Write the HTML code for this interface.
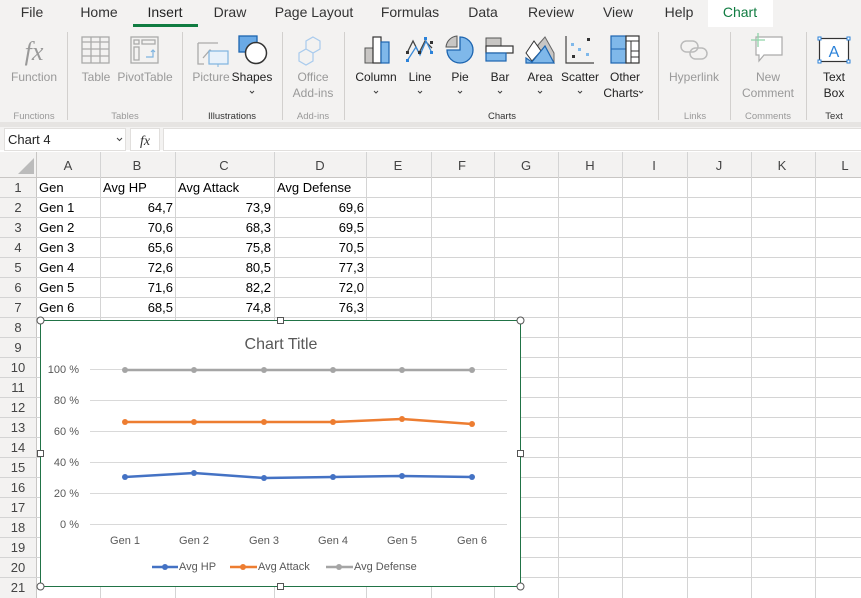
<!DOCTYPE html>
<html><head><meta charset="utf-8"><style>
html,body{margin:0;padding:0;width:861px;height:598px;overflow:hidden;background:#fff}
svg{display:block;font-family:"Liberation Sans",sans-serif}
</style></head><body>
<svg width="861" height="598" viewBox="0 0 861 598" xmlns="http://www.w3.org/2000/svg">
<!-- ribbon -->
<rect x="0" y="0" width="861" height="150" fill="#f3f2f1"/>
<rect x="0" y="122" width="861" height="5" fill="#e6e4e2"/>
<rect x="708" y="0" width="65" height="27" fill="#fff"/>
<g font-size="14" fill="#333" text-anchor="middle">
<text x="32" y="17">File</text><text x="99" y="17">Home</text>
<text x="165" y="17" fill="#222">Insert</text><text x="230" y="17">Draw</text>
<text x="314" y="17">Page Layout</text><text x="410" y="17">Formulas</text>
<text x="483" y="17">Data</text><text x="551" y="17">Review</text>
<text x="618" y="17">View</text><text x="679" y="17">Help</text>
<text x="740" y="17" fill="#107c41">Chart</text>
</g>
<rect x="133" y="24" width="65" height="3" fill="#107c41"/>
<g stroke="#d2d0ce" stroke-width="1">
<line x1="67.5" y1="32" x2="67.5" y2="120"/><line x1="182.5" y1="32" x2="182.5" y2="120"/>
<line x1="282.5" y1="32" x2="282.5" y2="120"/><line x1="344.5" y1="32" x2="344.5" y2="120"/>
<line x1="658.5" y1="32" x2="658.5" y2="120"/><line x1="730.5" y1="32" x2="730.5" y2="120"/>
<line x1="806.5" y1="32" x2="806.5" y2="120"/>
</g>
<!-- icons -->
<text x="34" y="60" font-family="Liberation Serif,serif" font-style="italic" font-size="26" fill="#999" text-anchor="middle">fx</text>
<g fill="none" stroke="#aaa" stroke-width="1.3">
<rect x="82" y="37" width="27" height="26"/><line x1="82" y1="42" x2="109" y2="42"/><line x1="82" y1="49" x2="109" y2="49"/><line x1="82" y1="56" x2="109" y2="56"/><line x1="91" y1="37" x2="91" y2="63"/><line x1="100" y1="37" x2="100" y2="63"/>
<rect x="131" y="37" width="27" height="26"/><rect x="134" y="40" width="5" height="4"/><rect x="142" y="40" width="13" height="4"/><rect x="134" y="47" width="5" height="13"/>
<path d="M198 43h20M198 43v21h6M203 58l7-8 5 5" />
</g>
<path d="M146 57h7v-7M151 52l2-2 2 2" fill="none" stroke="#7fb4e0" stroke-width="1.2"/>
<rect x="209" y="51" width="19" height="13" fill="#e8f1fa" stroke="#7fb4e0" stroke-width="1.2"/>
<line x1="218" y1="64" x2="218" y2="67" stroke="#7fb4e0"/>
<rect x="239" y="36" width="18" height="16" fill="#6aaae6" stroke="#1d65b0" stroke-width="1.3"/>
<circle cx="256" cy="53" r="10.5" fill="#fff" stroke="#333" stroke-width="1.5"/>
<path d="M313 37l7 4v8l-7 4-7-4v-8zM306 49l7 4v8l-7 4-7-4v-8z" fill="none" stroke="#a9cbed" stroke-width="1.2"/>
<!-- column -->
<rect x="365" y="48" width="8" height="15" fill="#c8c6c4" stroke="#555" stroke-width="1"/>
<rect x="373" y="37" width="8" height="26" fill="#fff" stroke="#333" stroke-width="1.2"/>
<rect x="381" y="42" width="8" height="21" fill="#7fb8ea" stroke="#1d65b0" stroke-width="1.2"/>
<!-- line -->
<path d="M407 53l6-12 6 12 6-12 7 7" fill="none" stroke="#444" stroke-width="1.3"/>
<path d="M407 61l9-14 4 8 6-14 6 12" fill="none" stroke="#3b8bd8" stroke-width="1.3"/>
<g fill="#333"><rect x="406" y="51" width="3" height="3"/><rect x="418" y="51" width="3" height="3"/><rect x="430" y="41" width="3" height="3"/></g>
<g fill="#2b82d9"><rect x="406" y="59" width="3" height="3"/><rect x="424" y="37" width="3" height="3"/><rect x="430" y="51" width="3" height="3"/></g>
<!-- pie -->
<path d="M460 37a13 13 0 1 1 -13 13h13z" fill="#7fb8ea" stroke="#1d65b0" stroke-width="1.3"/>
<path d="M457 36a12 12 0 0 0 -11 11h11z" fill="#c8c6c4" stroke="#555" stroke-width="1"/>
<!-- bar -->
<rect x="486" y="38" width="15" height="8" fill="#c8c6c4" stroke="#555"/>
<rect x="486" y="46" width="27" height="7" fill="#fff" stroke="#333" stroke-width="1.2"/>
<rect x="486" y="53" width="20" height="8" fill="#7fb8ea" stroke="#1d65b0" stroke-width="1.2"/>
<!-- area -->
<path d="M538 45l7-8 9 16v10h-16z" fill="#c8c6c4" stroke="#666"/>
<path d="M526 53l8-12 7 10-9 10z" fill="#fff" stroke="#333"/>
<path d="M526 63v-5l6 4 13-16 9 17z" fill="#7fb8ea" stroke="#1d65b0" stroke-width="1.2"/>
<!-- scatter -->
<path d="M566 36v27h28" fill="none" stroke="#444" stroke-width="1.2"/>
<g fill="#333"><rect x="587" y="38" width="3" height="3"/><rect x="572" y="55" width="3" height="3"/></g>
<g fill="#7fb8ea"><rect x="571" y="43" width="3" height="3"/><rect x="578" y="48" width="3" height="3"/><rect x="586" y="53" width="3" height="3"/></g>
<!-- other -->
<rect x="611" y="36" width="15" height="27" fill="#7fb8ea" stroke="#1d65b0" stroke-width="1.2"/>
<line x1="611" y1="49" x2="626" y2="49" stroke="#1d65b0"/>
<rect x="626" y="36" width="13" height="27" fill="#fff" stroke="#333" stroke-width="1.2"/>
<path d="M626 41h13M631 41v22M631 51h8M631 57h8" stroke="#333" fill="none"/>
<!-- hyperlink -->
<g fill="none" stroke="#bbb" stroke-width="1.5"><rect x="681" y="41" width="17" height="11" rx="5.5"/><rect x="690" y="48" width="17" height="11" rx="5.5"/></g>
<!-- comment -->
<path d="M756 37h26v18h-18l-5 6v-6h-3z" fill="#fff" stroke="#aaa" stroke-width="1.2"/>
<path d="M758 33v14M751 40h14" stroke="#8fd3a8" stroke-width="1.3"/>
<!-- textbox -->
<rect x="819.5" y="38.5" width="29" height="23" fill="#fff" stroke="#333" stroke-width="1.2"/>
<g fill="#fff" stroke="#2b82d9"><rect x="818" y="37" width="3" height="3"/><rect x="847" y="37" width="3" height="3"/><rect x="818" y="60" width="3" height="3"/><rect x="847" y="60" width="3" height="3"/></g>
<text x="834" y="57" font-size="16" fill="#2b82d9" text-anchor="middle">A</text>
<!-- button labels -->
<g font-size="12" text-anchor="middle" fill="#222">
<text x="34" y="81" fill="#999">Function</text><text x="96" y="81" fill="#999">Table</text><text x="145" y="81" fill="#999">PivotTable</text>
<text x="211" y="81" fill="#999">Picture</text><text x="252" y="81">Shapes</text>
<text x="313" y="81" fill="#999">Office</text><text x="313" y="97" fill="#999">Add-ins</text>
<text x="376" y="81">Column</text><text x="420" y="81">Line</text><text x="460" y="81">Pie</text><text x="500" y="81">Bar</text>
<text x="540" y="81">Area</text><text x="580" y="81">Scatter</text><text x="625" y="81">Other</text><text x="621" y="97">Charts</text>
<text x="694" y="81" fill="#999">Hyperlink</text><text x="768" y="81" fill="#999">New</text><text x="768" y="97" fill="#999">Comment</text>
<text x="834" y="81">Text</text><text x="834" y="97">Box</text>
</g>
<g fill="none" stroke="#444" stroke-width="1">
<path d="M250 91l2 2 2-2M374 91l2 2 2-2M418 91l2 2 2-2M458 91l2 2 2-2M498 91l2 2 2-2M538 91l2 2 2-2M578 91l2 2 2-2M639 91l2 2 2-2"/>
</g>
<g font-size="9.5" text-anchor="middle" fill="#999">
<text x="34" y="119">Functions</text><text x="125" y="119">Tables</text><text x="232" y="119" fill="#333">Illustrations</text>
<text x="313" y="119">Add-ins</text><text x="502" y="119" fill="#333">Charts</text><text x="695" y="119">Links</text>
<text x="768" y="119">Comments</text><text x="834" y="119" fill="#333">Text</text>
</g>
<!-- formula bar -->
<rect x="4.5" y="128.5" width="121" height="22" fill="#fff" stroke="#e1dfdd"/>
<text x="8" y="144" font-size="13" fill="#222">Chart 4</text>
<path d="M117 138l2.5 2.5 2.5-2.5" fill="none" stroke="#444"/>
<rect x="130.5" y="128.5" width="29" height="22" fill="#fff" stroke="#e1dfdd"/>
<text x="145" y="145" font-family="Liberation Serif,serif" font-style="italic" font-size="14" fill="#333" text-anchor="middle">fx</text>
<rect x="163.5" y="128.5" width="700" height="22" fill="#fff" stroke="#e1dfdd"/>
<!-- headers -->
<rect x="0" y="152" width="861" height="26" fill="#f3f2f1"/>
<rect x="0" y="178" width="36" height="420" fill="#f3f2f1"/>
<path d="M34 158v16h-16z" fill="#bbb"/>
<g stroke="#d4d4d4" stroke-width="1">
<line x1="0" y1="177.5" x2="861" y2="177.5" stroke="#c8c6c4"/>
<line x1="36.5" y1="152" x2="36.5" y2="598" stroke="#c8c6c4"/>
<path d="M100.5 152v446M175.5 152v446M274.5 152v446M366.5 152v446M431.5 152v446M494.5 152v446M558.5 152v446M622.5 152v446M687.5 152v446M751.5 152v446M815.5 152v446"/>
<path d="M0 197.5h861M0 217.5h861M0 237.5h861M0 257.5h861M0 277.5h861M0 297.5h861M0 317.5h861M0 337.5h861M0 357.5h861M0 377.5h861M0 397.5h861M0 417.5h861M0 437.5h861M0 457.5h861M0 477.5h861M0 497.5h861M0 517.5h861M0 537.5h861M0 557.5h861M0 577.5h861"/>
</g>
<g font-size="13" fill="#444" text-anchor="middle">
<text x="68" y="170">A</text><text x="137" y="170">B</text><text x="224" y="170">C</text><text x="320" y="170">D</text><text x="398" y="170">E</text><text x="462" y="170">F</text><text x="526" y="170">G</text><text x="590" y="170">H</text><text x="654" y="170">I</text><text x="719" y="170">J</text><text x="782" y="170">K</text><text x="845" y="170">L</text>
<text x="18" y="192">1</text><text x="18" y="212">2</text><text x="18" y="232">3</text><text x="18" y="252">4</text><text x="18" y="272">5</text><text x="18" y="292">6</text><text x="18" y="312">7</text><text x="18" y="332">8</text><text x="18" y="352">9</text><text x="18" y="372">10</text><text x="18" y="392">11</text><text x="18" y="412">12</text><text x="18" y="432">13</text><text x="18" y="452">14</text><text x="18" y="472">15</text><text x="18" y="492">16</text><text x="18" y="512">17</text><text x="18" y="532">18</text><text x="18" y="552">19</text><text x="18" y="572">20</text><text x="18" y="592">21</text>
</g>
<g font-size="13" fill="#000">
<text x="39" y="192">Gen</text><text x="103" y="192">Avg HP</text><text x="178" y="192">Avg Attack</text><text x="277" y="192">Avg Defense</text>
<text x="39" y="212">Gen 1</text><text x="39" y="232">Gen 2</text><text x="39" y="252">Gen 3</text><text x="39" y="272">Gen 4</text><text x="39" y="292">Gen 5</text><text x="39" y="312">Gen 6</text>
<g text-anchor="end">
<text x="173" y="212">64,7</text><text x="271" y="212">73,9</text><text x="364" y="212">69,6</text>
<text x="173" y="232">70,6</text><text x="271" y="232">68,3</text><text x="364" y="232">69,5</text>
<text x="173" y="252">65,6</text><text x="271" y="252">75,8</text><text x="364" y="252">70,5</text>
<text x="173" y="272">72,6</text><text x="271" y="272">80,5</text><text x="364" y="272">77,3</text>
<text x="173" y="292">71,6</text><text x="271" y="292">82,2</text><text x="364" y="292">72,0</text>
<text x="173" y="312">68,5</text><text x="271" y="312">74,8</text><text x="364" y="312">76,3</text>
</g></g>
<!-- chart -->
<rect x="40.5" y="320.5" width="480" height="266" fill="#fff" stroke="#217346" stroke-width="1"/>
<text x="281" y="349" font-size="16" fill="#595959" text-anchor="middle">Chart Title</text>
<g stroke="#d9d9d9"><path d="M90 369.5h417M90 400.5h417M90 431.5h417M90 462.5h417M90 493.5h417M90 524.5h417"/></g>
<g font-size="11" fill="#595959" text-anchor="end">
<text x="79" y="373">100 %</text><text x="79" y="404">80 %</text><text x="79" y="435">60 %</text><text x="79" y="466">40 %</text><text x="79" y="497">20 %</text><text x="79" y="528">0 %</text>
</g>
<g font-size="11" fill="#595959" text-anchor="middle">
<text x="125" y="544">Gen 1</text><text x="194" y="544">Gen 2</text><text x="264" y="544">Gen 3</text><text x="333" y="544">Gen 4</text><text x="402" y="544">Gen 5</text><text x="472" y="544">Gen 6</text>
</g>
<polyline points="125,370 194,370 264,370 333,370 402,370 472,370" fill="none" stroke="#a5a5a5" stroke-width="2.5"/>
<g fill="#a5a5a5"><circle cx="125" cy="370" r="3"/><circle cx="194" cy="370" r="3"/><circle cx="264" cy="370" r="3"/><circle cx="333" cy="370" r="3"/><circle cx="402" cy="370" r="3"/><circle cx="472" cy="370" r="3"/></g>
<polyline points="125,422 194,422 264,422 333,422 402,419 472,424" fill="none" stroke="#ed7d31" stroke-width="2.5"/>
<g fill="#ed7d31"><circle cx="125" cy="422" r="3"/><circle cx="194" cy="422" r="3"/><circle cx="264" cy="422" r="3"/><circle cx="333" cy="422" r="3"/><circle cx="402" cy="419" r="3"/><circle cx="472" cy="424" r="3"/></g>
<polyline points="125,477 194,473 264,478 333,477 402,476 472,477" fill="none" stroke="#4472c4" stroke-width="2.5"/>
<g fill="#4472c4"><circle cx="125" cy="477" r="3"/><circle cx="194" cy="473" r="3"/><circle cx="264" cy="478" r="3"/><circle cx="333" cy="477" r="3"/><circle cx="402" cy="476" r="3"/><circle cx="472" cy="477" r="3"/></g>
<g stroke-width="2.5"><line x1="152" y1="567" x2="178" y2="567" stroke="#4472c4"/><line x1="230" y1="567" x2="257" y2="567" stroke="#ed7d31"/><line x1="326" y1="567" x2="353" y2="567" stroke="#a5a5a5"/></g>
<circle cx="165" cy="567" r="3" fill="#4472c4"/><circle cx="243" cy="567" r="3" fill="#ed7d31"/><circle cx="339" cy="567" r="3" fill="#a5a5a5"/>
<g font-size="11" fill="#595959"><text x="179" y="570">Avg HP</text><text x="258" y="570">Avg Attack</text><text x="354" y="570">Avg Defense</text></g>
<g fill="#fff" stroke="#555" stroke-width="1">
<circle cx="40.5" cy="320.5" r="3.5"/><circle cx="520.5" cy="320.5" r="3.5"/><circle cx="40.5" cy="586.5" r="3.5"/><circle cx="520.5" cy="586.5" r="3.5"/>
<rect x="277.5" y="317.5" width="6" height="6"/><rect x="277.5" y="583.5" width="6" height="6"/><rect x="37.5" y="450.5" width="6" height="6"/><rect x="517.5" y="450.5" width="6" height="6"/>
</g>
</svg>
</body></html>
